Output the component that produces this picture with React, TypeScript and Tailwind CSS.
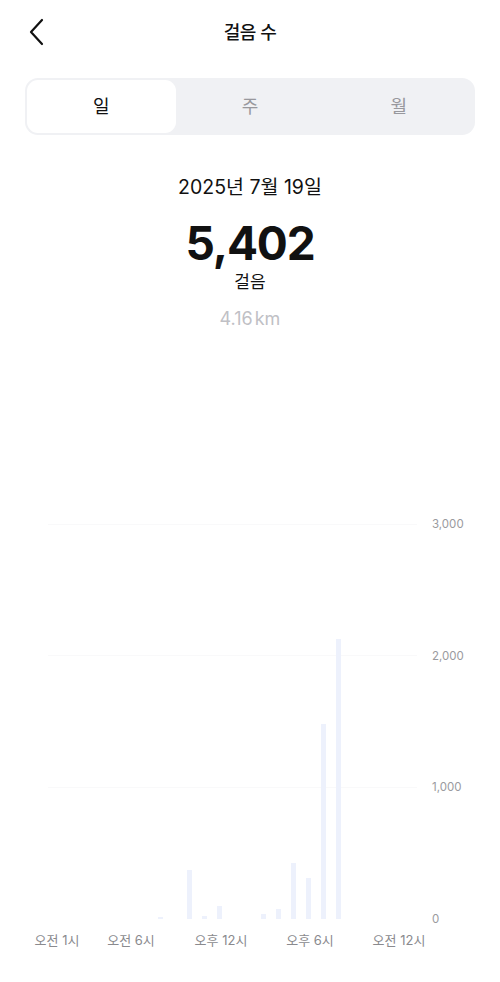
import React from "react";

const bars: Record<number, number> = {
  7: 2,
  9: 49,
  10: 3,
  11: 13,
  14: 5,
  15: 10,
  16: 56,
  17: 41,
  18: 195,
  19: 280,
};

const xLabels = [
  { text: "오전 1시", x: 57 },
  { text: "오전 6시", x: 131 },
  { text: "오후 12시", x: 221 },
  { text: "오후 6시", x: 310 },
  { text: "오전 12시", x: 399 },
];

const yLabels = ["3,000", "2,000", "1,000", "0"];

const App: React.FC = () => {
  return (
    <div
      className="w-[500px] min-h-[982px] bg-white text-[#111111]"
      style={{ fontFamily: "Inter, 'Noto Sans CJK KR', sans-serif" }}
    >
      {/* Header */}
      <div className="relative h-[64px] flex items-center justify-center">
        <button className="absolute left-[23px] top-[16px] w-[28px] h-[32px] flex items-center justify-center">
          <svg width="18" height="28" viewBox="0 0 18 28" fill="none">
            <path d="M14 2 L3 14 L14 26" stroke="#111" strokeWidth="2.2" strokeLinecap="round" strokeLinejoin="round" />
          </svg>
        </button>
        <h1 className="text-[18px] font-medium tracking-tight">걸음 수</h1>
      </div>

      {/* Segmented control */}
      <div className="mt-[14px] mx-[25px] h-[57px] rounded-[13px] bg-[#f0f1f4] p-[2px] grid grid-cols-3">
        <div className="rounded-[11px] bg-white flex items-center justify-center text-[18px] text-[#111]">일</div>
        <div className="flex items-center justify-center text-[18px] text-[#98989d]">주</div>
        <div className="flex items-center justify-center text-[18px] text-[#98989d]">월</div>
      </div>

      {/* Summary */}
      <div className="flex flex-col items-center">
        <div className="mt-[40px] text-[19.5px] leading-[24px]">2025년 7월 19일</div>
        <div className="mt-[16px] text-[46px] leading-[56px] font-bold tracking-tight">5,402</div>
        <div className="text-[17px] leading-[22px]">걸음</div>
        <div className="mt-[15px] text-[18px] leading-[22px] text-[#c0c0c5]">
          4.16<span className="ml-[2px]">km</span>
        </div>
      </div>

      {/* Chart */}
      <div className="mt-[194px] flex">
        <div className="relative ml-[44px] w-[373px] h-[395px]">
          <div className="absolute inset-y-0 left-[4px] right-0 flex flex-col justify-between">
            <div className="h-px bg-[#f9f9fa]" />
            <div className="h-px bg-[#f9f9fa]" />
            <div className="h-px bg-[#f9f9fa]" />
            <div className="h-px bg-transparent" />
          </div>
          <div className="absolute inset-y-0 left-0 w-[356px] grid grid-cols-[repeat(24,minmax(0,1fr))] items-end">
            {Array.from({ length: 24 }).map((_, i) => (
              <div key={i} className="flex justify-end">
                {bars[i] ? (
                  <div className="w-[5px] bg-[#edf1fc]" style={{ height: bars[i] }} />
                ) : null}
              </div>
            ))}
          </div>
        </div>
        <div className="ml-[15px] h-[409px] -mt-[7px] -mb-[7px] flex flex-col justify-between">
          {yLabels.map((l) => (
            <div key={l} className="text-[11.5px] leading-[14px] text-[#9a9a9e]">
              {l}
            </div>
          ))}
        </div>
      </div>

      <div className="relative mt-[12px] h-[18px]">
        {xLabels.map((l) => (
          <span
            key={l.text}
            className="absolute top-0 -translate-x-1/2 whitespace-nowrap text-[13px] leading-[18px] text-[#8a8a8e]"
            style={{ left: l.x }}
          >
            {l.text}
          </span>
        ))}
      </div>
    </div>
  );
};

export default App;
